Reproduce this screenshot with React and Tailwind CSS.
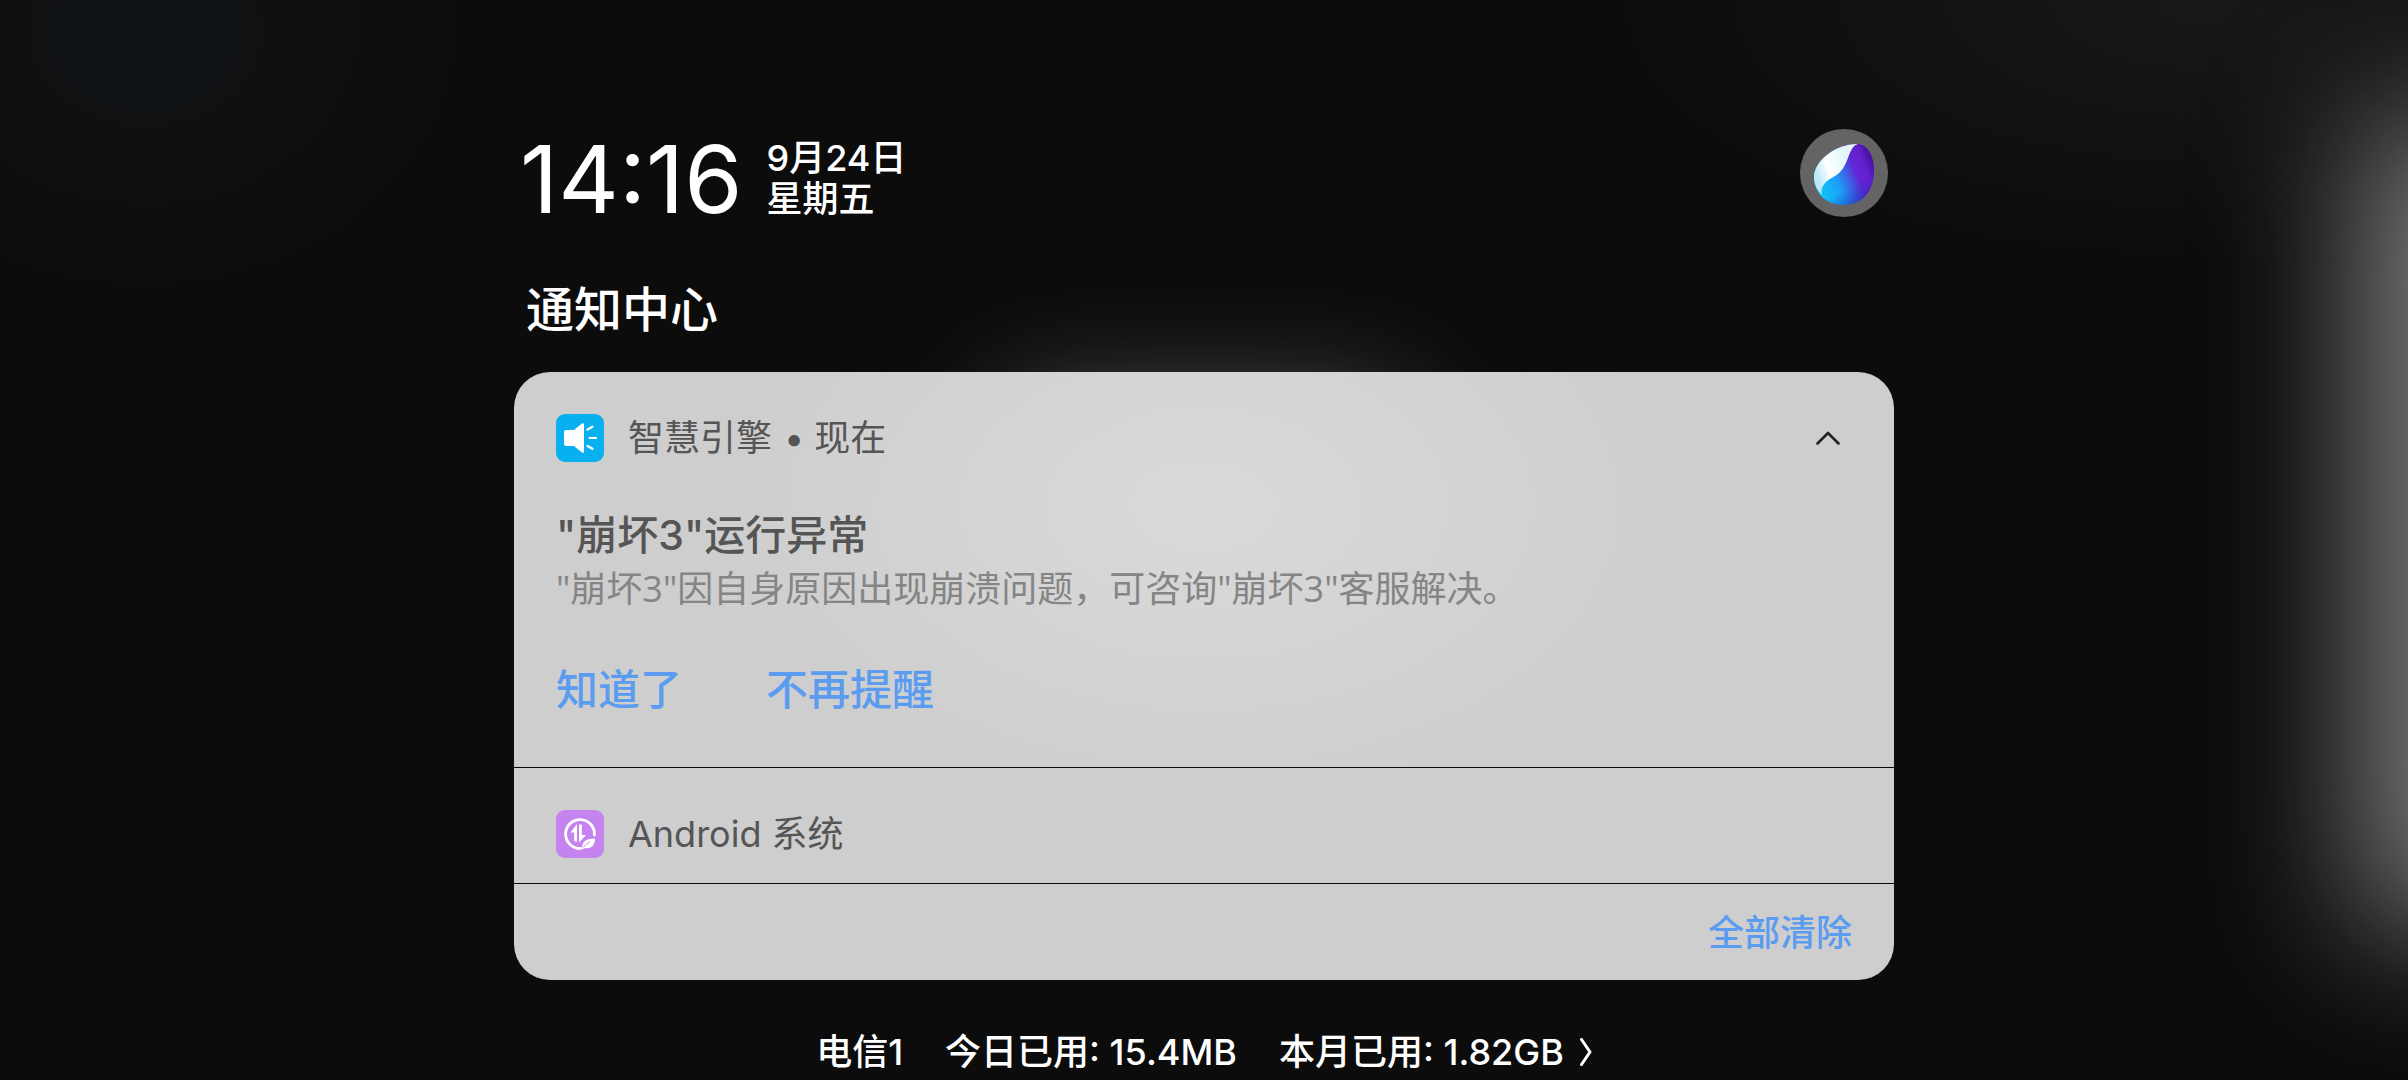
const USAGE = [
  { id: 'sim', text: '电信1' },
  { id: 'today', text: '今日已用: 15.4MB' },
  { id: 'month', text: '本月已用: 1.82GB' },
];

function Backdrop() {
  return (
    <div aria-hidden="true" className="absolute inset-0 -z-10 overflow-hidden">
      <div className="absolute inset-0 bg-[radial-gradient(320px_260px_at_6%_3%,#101316,transparent)]" />
      <div className="absolute inset-0 bg-[radial-gradient(600px_260px_at_92%_0%,#181817,transparent)]" />
      <div className="absolute inset-x-[42%] top-[38%] h-[280px] bg-[#686868] blur-[60px]" />
      <div className="absolute top-[11%] bottom-[14%] -right-60 w-[290px] bg-[#7c7c7c] blur-[72px]" />
    </div>
  );
}

function JoviIcon() {
  return (
    <svg viewBox="0 0 88 88" className="size-[88px]" aria-hidden="true">
      <defs>
        <linearGradient id="orb" x1="22" y1="60" x2="74" y2="38" gradientUnits="userSpaceOnUse">
          <stop offset="0" stopColor="#0fc0fb" />
          <stop offset="0.3" stopColor="#1e9df6" />
          <stop offset="0.5" stopColor="#3a62e6" />
          <stop offset="0.66" stopColor="#6328d6" />
          <stop offset="0.85" stopColor="#6420cf" />
          <stop offset="1" stopColor="#4a12a8" />
        </linearGradient>
        <linearGradient id="orbShade" x1="46" y1="50" x2="60" y2="76" gradientUnits="userSpaceOnUse">
          <stop offset="0.3" stopColor="#2020b0" stopOpacity="0" />
          <stop offset="1" stopColor="#2020b0" stopOpacity="0.6" />
        </linearGradient>
        <linearGradient id="orbLight" x1="16" y1="42" x2="46" y2="32" gradientUnits="userSpaceOnUse">
          <stop offset="0" stopColor="#bfe9f7" />
          <stop offset="0.4" stopColor="#ffffff" />
          <stop offset="1" stopColor="#e2f6fc" />
        </linearGradient>
      </defs>
      <circle cx="44" cy="44" r="44" fill="#646464" />
      <path d="M58 15C68 16 74 27 74 42C74 62 62 76 43 76C27 76 14 65 14 48C14 31 38 14 58 15Z" fill="url(#orb)" />
      <path d="M58 15C68 16 74 27 74 42C74 62 62 76 43 76C27 76 14 65 14 48C14 31 38 14 58 15Z" fill="url(#orbShade)" />
      <path d="M58 15C38 14 14 31 14 48C14 55 17 61 22 66C20 58 25 52 35 47C50 38 47 18 58 15Z" fill="url(#orbLight)" />
    </svg>
  );
}

function SpeakerIcon() {
  return (
    <svg viewBox="0 0 48 48" className="size-12" aria-hidden="true">
      <rect width="48" height="48" rx="9" fill="#08b0ef" />
      <path d="M10 16h8l8-6.400q2-1 2 1v27q0 2-2 1l-8-6.600h-8q-2 0-2-2V18q0-2 2-2z" fill="#fff" />
      <path d="M31.500 15.500l5-2.800M33.500 24h6.500M31.500 32l5 2.800" stroke="#fff" strokeWidth="2.200" strokeLinecap="round" />
    </svg>
  );
}

function DataSaverIcon() {
  return (
    <svg viewBox="0 0 48 48" className="size-12" aria-hidden="true">
      <rect width="48" height="48" rx="9" fill="#c583ef" />
      <path d="M25 38.400A14.400 14.400 0 1 1 38.400 25" fill="none" stroke="#fff" strokeWidth="2.800" strokeLinecap="round" />
      <path d="M14.500 22.500l6.500-8.500v17.500h-2.800v-9zM23 14.500h2.800v10.500h4.200l-7 7.500z" fill="#fff" />
      <path d="M26.500 38c-1-6.500 4-9.500 12.500-9.500c0 7-4 10.500-9.500 9.500l-3.500 1.500z" fill="#fff" />
      <path d="M27.500 37c2-2 4-3.500 6.500-5" fill="none" stroke="#c583ef" strokeWidth="0.900" />
    </svg>
  );
}

export default function App() {
  return (
    <div className="relative isolate min-h-screen overflow-hidden bg-[#0c0c0c] font-['Inter','Noto_Sans_CJK_SC',sans-serif] text-white">
      <Backdrop />

      <main className="mx-auto w-full max-w-[1380px] pt-[129px]">
        <header className="flex items-start justify-between px-1.5">
          <div className="flex items-center gap-6">
            <time className="text-[94px] leading-[100px]">14:16</time>
            <div className="text-4xl leading-[41px] font-medium">
              <p>9月24日</p>
              <p>星期五</p>
            </div>
          </div>
          <button type="button" aria-label="Jovi">
            <JoviIcon />
          </button>
        </header>

        <h1 className="mt-[57px] px-3 text-5xl leading-[48px] font-medium">通知中心</h1>

        <section className="mt-[38px] rounded-[36px] bg-[#cecece] bg-[radial-gradient(480px_300px_at_50%_22%,#dadada,transparent)] text-4xl text-[#555]">
          <article className="border-b border-[#0c0c0c] px-[42px] pt-[42px] pb-[50px]">
            <div className="flex items-center">
              <SpeakerIcon />
              <span className="ml-6 leading-[48px]">智慧引擎</span>
              <span className="mr-2.5 ml-3 leading-[48px]">•</span>
              <span className="leading-[48px]">现在</span>
              <button type="button" aria-label="收起" className="mr-3 ml-auto">
                <svg viewBox="0 0 24 14" className="h-[14px] w-6" aria-hidden="true">
                  <path d="M1.500 12.500L12 2l10.500 10.500" fill="none" stroke="#222" strokeWidth="2.600" strokeLinecap="round" strokeLinejoin="round" />
                </svg>
              </button>
            </div>
            <h2 className="mt-[46px] text-[41px] leading-[54px] font-medium">"崩坏3"运行异常</h2>
            <p className="font-['Open_Sans','Noto_Sans_CJK_SC',sans-serif] leading-[54px] text-[#858585]">
              "崩坏3"因自身原因出现崩溃问题，可咨询"崩坏3"客服解决。
            </p>
            <div className="mt-[47px] flex gap-[84px] text-[42px] leading-[54px] font-medium text-[#5b9cf0]">
              <button type="button">知道了</button>
              <button type="button">不再提醒</button>
            </div>
          </article>

          <article className="flex items-center border-b border-[#0c0c0c] px-[42px] pt-[42px] pb-[25px]">
            <DataSaverIcon />
            <span className="ml-6 leading-[48px]">Android 系统</span>
          </article>

          <div className="flex justify-end px-[42px] pt-[25px] pb-[23px]">
            <button type="button" className="leading-[48px] font-medium text-[#5b9cf0]">全部清除</button>
          </div>
        </section>

        <footer className="mt-12">
          <a href="#usage" className="flex items-center justify-center text-4xl leading-[48px] font-medium">
            <span className="flex gap-[42px]">
              {USAGE.map((item) => (
                <span key={item.id}>{item.text}</span>
              ))}
            </span>
            <svg viewBox="0 0 12 28" className="ml-4 h-7 w-3" aria-hidden="true">
              <path d="M1.500 1.500l8.500 12.500l-8.500 12.500" fill="none" stroke="#fff" strokeWidth="3" strokeLinecap="round" strokeLinejoin="round" />
            </svg>
          </a>
        </footer>
      </main>
    </div>
  );
}
